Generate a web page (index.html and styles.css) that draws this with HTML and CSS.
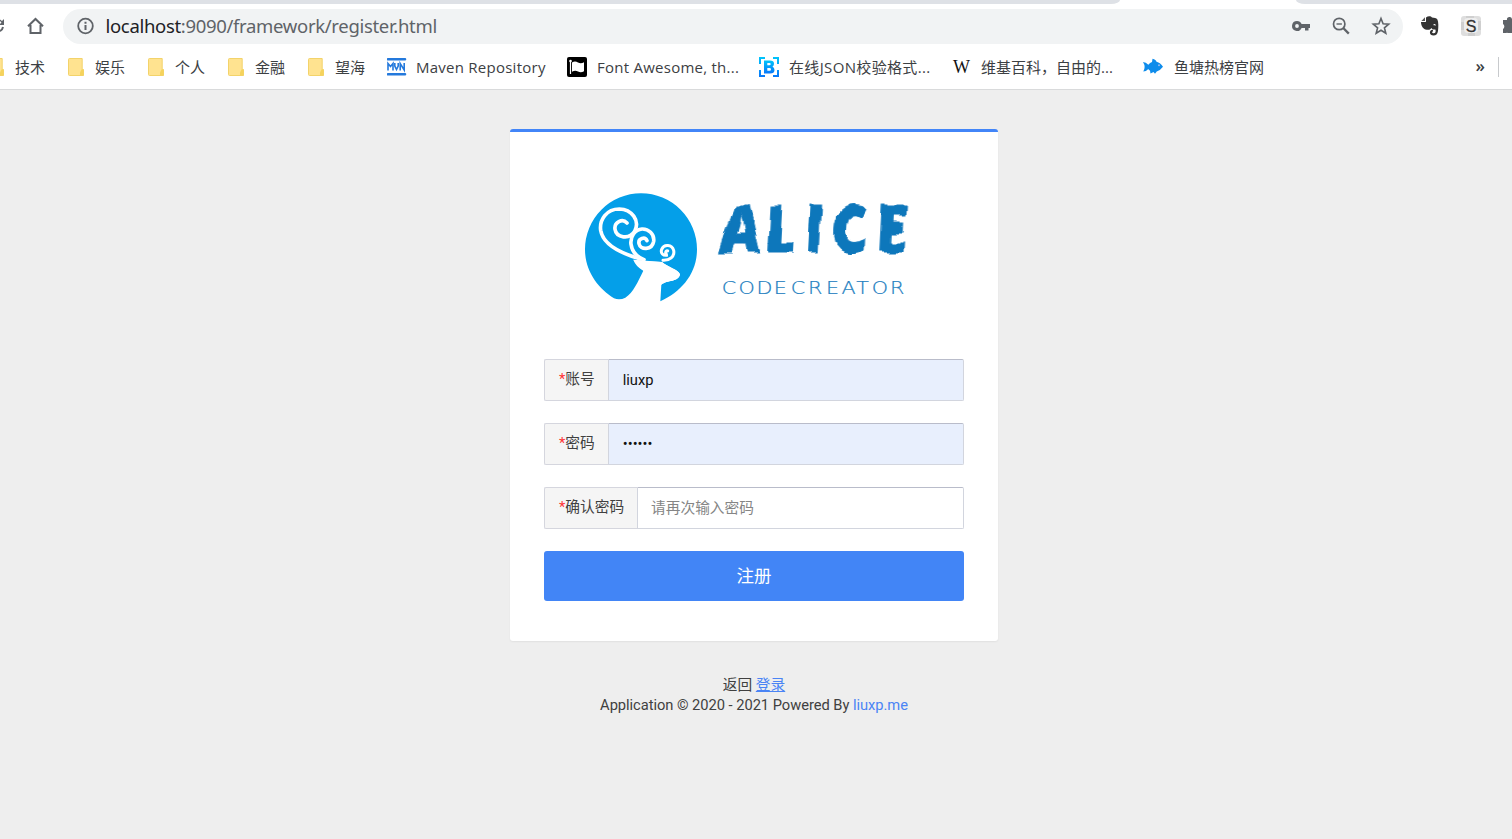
FILE: index.html
```html
<!DOCTYPE html>
<html lang="zh-CN">
<head>
<meta charset="utf-8">
<title>注册</title>
<link rel="stylesheet" href="styles.css">
</head>
<body>
<header class="browser">
  <div class="tabstrip"><span class="tabs-left"></span><span class="tabs-right"></span></div>
  <div class="toolbar">
    <svg class="reload" width="6" height="20" viewBox="0 0 6 20"><path d="M4 3v6H0V8l1.500-1.500L0 5V3.500l2 1.500z" fill="#5f6368"/><path d="M3 11Q2.400 14 0 15" fill="none" stroke="#5f6368" stroke-width="2"/></svg>
    <svg class="home" width="18" height="18" viewBox="0 0 18 18"><path d="M1 9.300 8.500 2l7.500 7.300M3.500 8v8h10V8" fill="none" stroke="#5f6368" stroke-width="2"/></svg>
    <div class="omnibox">
      <svg width="18" height="18" viewBox="0 0 18 18"><circle cx="8.500" cy="9" r="7.300" fill="none" stroke="#5f6368" stroke-width="1.800"/><path d="M8.500 8v5M8.500 4.700v2" stroke="#5f6368" stroke-width="2"/></svg>
      <span class="url"><span class="host">localhost</span>:9090/framework/register.html</span>
      <div class="actions">
        <svg width="20" height="20" viewBox="0 0 20 20"><path fill-rule="evenodd" d="M6 5a5 5 0 0 1 4.600 3H19v4h-1.500v2.500H14V12h-3.400A5 5 0 1 1 6 5zm0 3.100a1.900 1.900 0 1 0 0 3.800 1.900 1.900 0 0 0 0-3.800z" fill="#5f6368"/></svg>
        <svg width="20" height="20" viewBox="0 0 20 20"><circle cx="8.200" cy="8" r="5.700" fill="none" stroke="#5f6368" stroke-width="1.700"/><path d="M5.500 8h5.400" stroke="#5f6368" stroke-width="1.400"/><path d="m12.200 12 5.600 5.600" stroke="#5f6368" stroke-width="2.300"/></svg>
        <svg width="20" height="20" viewBox="0 0 20 20"><path d="m10 2.500 2.100 5.300 5.600.4-4.300 3.600 1.400 5.500-4.800-3-4.800 3 1.400-5.500-4.300-3.600 5.600-.4z" fill="none" stroke="#5f6368" stroke-width="1.600"/></svg>
      </div>
    </div>
    <svg class="evernote" width="20" height="22" viewBox="0 0 20 22"><path d="M6 2.500C8 .8 11 1 12 2.500c2 .4 4.500.5 5.400 2C18.600 7 18.500 12 18 16c-.5 3.300-2 4.500-4.500 4.500-2.200 0-3.600-1.300-3.600-3s1.300-3 3-2.800l.2 1.500c-1.500.2-1.300 2.100.5 2.100 2 0 2.400-1.800 1.800-3.800-1.400.4-3.200-.2-4-1.500-1.200 2-3.500 2.200-6 1.400C2.500 13.500 1 10 1 7h4.500Q6.200 6.800 6 6z" fill="#333"/><path d="M5 2.300V5.500Q5 6 4.500 6H1.400z" fill="#555"/><path d="M13.500 9.200q2-.8 2.600 1.300-1.200-.5-2.600-.3z" fill="#fff"/></svg>
    <svg class="ext" width="22" height="22" viewBox="0 0 22 22"><rect x="1" y="1" width="20" height="20" rx="3" fill="#dedede"/><path d="M1 7h5V1h8v5h7v9h-6v6H8v-6H1z" fill="#cfcfcf"/><rect x="4" y="3" width="14" height="15" rx="4" fill="#eee"/><text x="11" y="16.500" text-anchor="middle" class="ext-letter">S</text></svg>
    <svg class="puzzle" width="10" height="20" viewBox="0 0 10 20"><path d="M1 4h4a2.500 2.500 0 0 1 5-1v14H6a3 3 0 0 0-2 0H1v-4a3 3 0 0 0 0-5z" fill="#5f6368"/></svg>
  </div>
  <nav class="bookmarks">
    <a class="bm first"><svg width="5" height="20" viewBox="13 0 5 20"><use href="#folder"/></svg><span>技术</span></a>
    <a class="bm folder"><svg width="20" height="20" viewBox="0 0 20 20"><g id="folder"><path d="M2.500 1.500h12.700v11h1.300v6h-14Q1.500 18.500 1.500 17.500v-15Q1.500 1.500 2.500 1.500z" fill="#ffe390" stroke="#f3d36a"/><path d="M14.500 12.500h2v6h-3.500v-3z" fill="#f5d35d"/></g></svg><span>娱乐</span></a>
    <a class="bm folder"><svg width="20" height="20" viewBox="0 0 20 20"><use href="#folder"/></svg><span>个人</span></a>
    <a class="bm folder"><svg width="20" height="20" viewBox="0 0 20 20"><use href="#folder"/></svg><span>金融</span></a>
    <a class="bm folder"><svg width="20" height="20" viewBox="0 0 20 20"><use href="#folder"/></svg><span>望海</span></a>
    <a class="bm maven"><svg width="20" height="20" viewBox="0 0 20 20"><path d="M1 2.300h17M1 17.300h17" stroke="#2479dc" stroke-width="2.600" stroke-linecap="round"/><path d="M1 13.500V6.500L3.500 9.500 6 6.500v7M7.800 6v3l1.700 3.500L11.200 9V6M13.200 13.500V6.500l4 6.500V6" fill="none" stroke="#2479dc" stroke-width="1.600"/></svg><span class="latin">Maven Repository</span></a>
    <a class="bm site"><svg width="20" height="20" viewBox="0 0 20 20"><rect width="20" height="20" rx="2" fill="#000"/><path d="M3.500 4v13" stroke="#fff" stroke-width="1.200"/><circle cx="3.500" cy="4" r="1.300" fill="#fff"/><path d="M5 5.500q3-1.800 6 0t6-.3v9q-3 1.700-6 .3t-6 .3z" fill="#fff"/></svg><span class="latin">Font Awesome, th...</span></a>
    <a class="bm site"><svg width="20" height="20" viewBox="0 0 20 20"><defs><linearGradient id="bg" x2="0" y2="1"><stop stop-color="#00c5fb"/><stop offset="1" stop-color="#0877f9"/></linearGradient></defs><path d="M0 0h6v2H2v5H0zM14 0h6v7h-2V2h-4zM0 13h2v5h4v2H0zM18 13h2v7h-6v-2h4z" fill="url(#bg)"/><path fill-rule="evenodd" d="M5 3.500h6q4 0 4 3.300 0 2-1.500 2.700Q15.500 10.500 15.500 13q0 3.500-4.500 3.500H5zm3.300 2.500v2.300h2q1.400 0 1.400-1.200t-1.400-1.100zm0 5v2.800h2.200q1.500 0 1.500-1.400T10.500 11z" fill="url(#bg)"/></svg><span class="json">在线JSON校验格式...</span></a>
    <a class="bm site"><svg width="20" height="20" viewBox="0 0 20 20"><text x="10.500" y="16" text-anchor="middle" class="w">W</text></svg><span>维基百科，自由的...</span></a>
    <a class="bm site last"><svg width="20" height="20" viewBox="0 0 20 20"><path d="M0 5q3 .2 5.300 2.800Q7 5.500 9 5L9.500 1.700Q13 2.500 13.500 4.800q4 1 6.500 5-3 4-6.300 4.700L12 16.800 10.500 15l-3 1.500-.5-3q-1.200-.5-1.700-1.500Q3 14.500.3 14.500q1.300-2 1.300-4.500T0 5z" fill="#0e8ceb"/><circle cx="16" cy="8.300" r="1" fill="#9be"/></svg><span>鱼塘热榜官网</span></a>
    <div class="more"><span>»</span><i></i></div>
  </nav>
</header>
<main class="page">
  <section class="card">
    <svg class="logo" width="355" height="135" viewBox="0 0 355 135">
      <defs><filter id="brush" x="-5%" y="-10%" width="110%" height="120%"><feTurbulence type="fractalNoise" baseFrequency=".06" numOctaves="1" seed="8"/><feDisplacementMap in="SourceGraphic" scale="9" xChannelSelector="R" yChannelSelector="G"/><feGaussianBlur stdDeviation=".35"/></filter></defs>
      <g transform="scale(.33333)">
        <path d="M132 355C85 325 45 275 45 208a168 168 0 0 1 336 0C381 280 335 335 271 364L274 314C292 300 326 307 330 283 325 268 292 261 276 246Q230 244 190 239 197 259 220 272C203 306 190 338 166 353Q149 362 132 355z" fill="#049fe9"/>
        <path d="M190 239Q205 262 221 272L270 310 274 314C292 300 326 307 330 283 325 268 292 261 276 246z" fill="#fff"/>
        <g fill="none" stroke="#fff" stroke-width="11" stroke-linecap="round">
          <path d="M171 129C157 114 132 127 135 148 139 174 178 180 194 154 211 121 185 88 148 87 110 87 88 119 92 151 99 195 151 220 212 237"/>
          <path d="M231 182C225 169 204 175 207 191 211 211 246 211 251 184 254 162 235 146 216 147 195 149 180 170 183 193Q188 226 222 239"/>
          <path d="M293 213C286 210 284 224 293 225 279 229 271 218 275 208 282 191 306 194 311 211 315 230 298 242 279 241 238 248 212 237" stroke-width="9"/>
        </g>
      </g>
      <g transform="translate(1 72) skewX(-3) scale(.86 1)"><text class="alice" x="173 225 270 302 354" y="0" filter="url(#brush)">ALICE</text></g>
      <text class="creator" transform="scale(1.12 1)" x="135.500 150.500 166.500 182 197 212.500 228.500 242.500 255.500 269.500 285.800" y="114.500">CODECREATOR</text>
    </svg>
    <form class="form">
      <div class="row"><label><b>*</b>账号</label><div class="field filled">liuxp</div></div>
      <div class="row"><label><b>*</b>密码</label><div class="field filled">••••••</div></div>
      <div class="row"><label><b>*</b>确认密码</label><div class="field hint">请再次输入密码</div></div>
      <button type="button">注册</button>
    </form>
  </section>
  <footer>
    <div>返回 <a class="login">登录</a></div>
    <div class="copy">Application © 2020 - 2021 Powered By <a>liuxp.me</a></div>
  </footer>
</main>
</body>
</html>
```
FILE: styles.css
```css
* { box-sizing: border-box; }
body { margin: 0; height: 839px; overflow: hidden; background: #eee; color: #404040; font: 15px/20px Roboto, "Noto Sans CJK SC", sans-serif; }
svg { display: block; flex: none; }
.browser { height: 90px; background: #fff; border-bottom: 1px solid #d9dadb; font-family: "Open Sans", "Noto Sans CJK SC", sans-serif; }
.tabstrip { display: flex; justify-content: space-between; height: 4px; }
.tabs-left { width: 1120px; background: #dee1e6; border-bottom-right-radius: 9px 4px; }
.tabs-right { width: 216px; background: #dee1e6; border-bottom-left-radius: 9px 4px; }
.toolbar { display: flex; align-items: center; height: 45px; }
.toolbar > svg { margin-bottom: 1px; }
.home { margin-left: 21px; }
.omnibox { display: flex; align-items: center; width: 1342px; height: 35px; margin-left: 18px; padding: 0 12px 1px 14px; border-radius: 18px; background: #f1f3f4; }
.url { margin-left: 10.500px; color: #5f6368; font: 18.500px/26px "Noto Sans", sans-serif; letter-spacing: -.32px; white-space: nowrap; }
.host { color: #202124; }
.actions { display: flex; gap: 20px; margin-left: auto; }
.evernote { margin-left: 17px; }
.ext { margin-left: 20px; }
.ext-letter { font: 16px "Liberation Sans", sans-serif; fill: #333; stroke: #333; stroke-width: .3px; }
.puzzle { margin-left: 20px; }
.bookmarks { display: flex; align-items: center; height: 37px; padding-bottom: 2px; color: #3c4043; font-size: 15px; white-space: nowrap; }
.bm { display: flex; align-items: center; gap: 9px; flex: none; }
.first { width: 67px; gap: 10px; }
.folder { width: 80px; gap: 8px; }
.maven { width: 180px; }
.site { width: 192px; gap: 10px; }
.last { gap: 11px; }
.latin { letter-spacing: .25px; }
.json { letter-spacing: .35px; }
.w { font: 18px "Liberation Serif", serif; fill: #111; }
.more { display: flex; align-items: center; gap: 13px; margin-left: auto; padding-right: 13px; font-weight: 600; font-size: 17px; }
.more span { padding-bottom: 2px; }
.more i { width: 1px; height: 20px; background: #c8cacd; }
.page { display: flex; flex-direction: column; align-items: center; padding: 39px 4px 0 0; }
.card { width: 488px; height: 512px; padding: 48px 34px 40px; border-top: 3px solid #4285f8; border-radius: 3px; background: #fff; box-shadow: 0 1px 2px rgba(0,0,0,.06); }
.logo { margin-left: 26px; }
.alice { font: 800 64px "Open Sans", sans-serif; fill: #1077bb; stroke: #1077bb; stroke-width: 1px; }
.creator { font: 200 18.500px "DejaVu Sans", "DejaVu Sans Light", sans-serif; fill: #1e80bf; stroke: #1e80bf; stroke-width: .25px; }
.form { display: flex; flex-direction: column; gap: 22px; margin-top: 44px; }
.row { display: flex; height: 42px; }
.row label { display: flex; align-items: center; padding: 0 13px 2px 14px; border: 1px solid #d5d6de; border-right: 0; border-radius: 2px 0 0 2px; background: #f5f5f5; font-size: 14.700px; }
.row b { color: #f33; font-weight: 400; }
.field { flex: 1; padding: 0 13px; border: 1px solid #d2d5de; border-top-color: #b9bcca; border-radius: 0 2px 2px 0; line-height: 40px; font-size: 14.700px; color: #858585; }
.filled { padding-left: 14px; background: #e8effd; color: #111; }
button { height: 50px; padding-bottom: 4px; border: 0; border-radius: 3px; background: #4285f6; color: #fff; font: 17.500px "Noto Sans CJK SC", sans-serif; }
footer { margin-top: 34px; text-align: center; font-size: 14.700px; }
footer a { color: #4a84f5; }
.login { text-decoration: underline; }
.copy { letter-spacing: -.04px; }
```
